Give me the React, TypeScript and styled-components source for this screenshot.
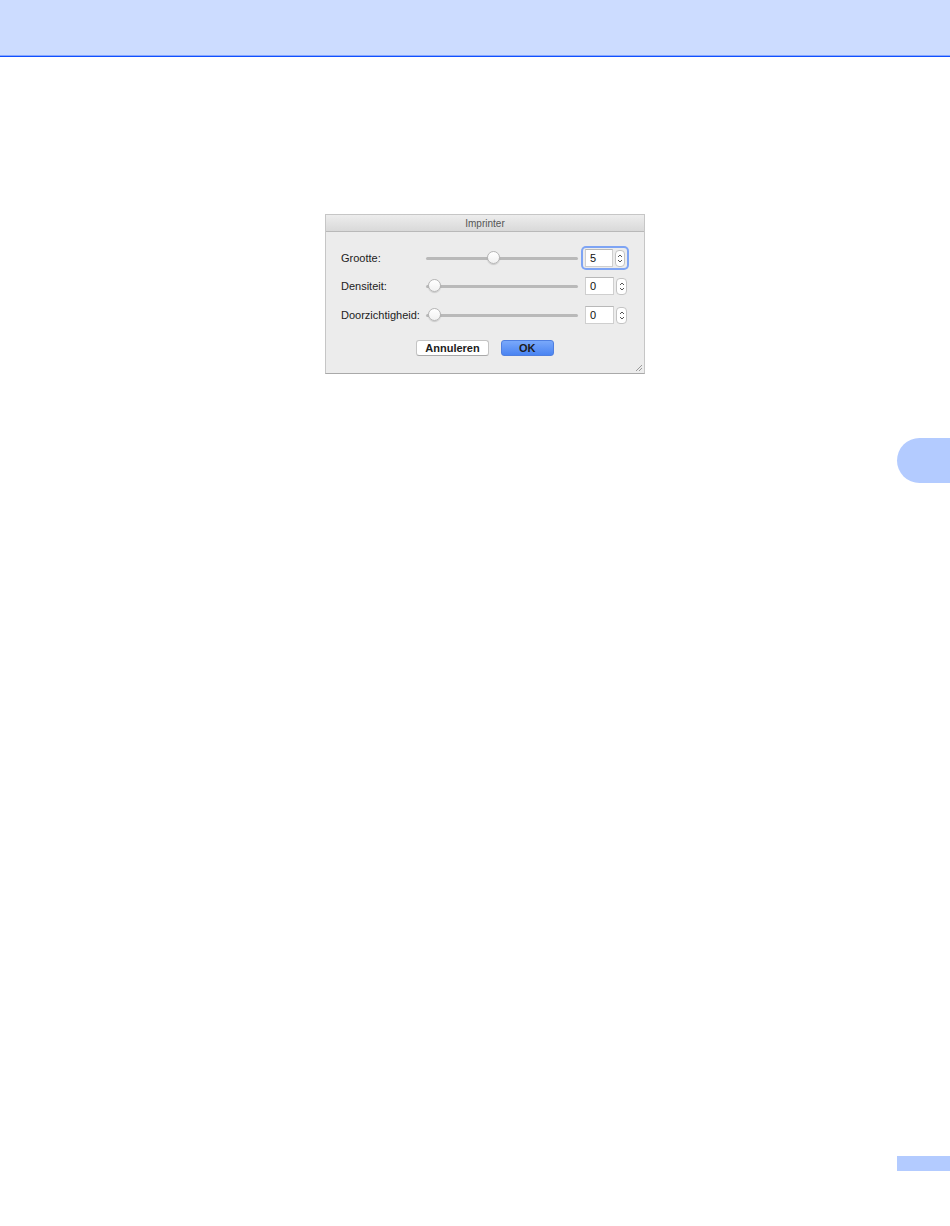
import React from 'react'
import styled, { createGlobalStyle } from 'styled-components'

const GlobalStyle = createGlobalStyle`
  html, body {
    margin: 0;
    padding: 0;
    background: #ffffff;
  }
  body {
    font-family: "Liberation Sans", Arial, sans-serif;
  }
`

const Page = styled.div`
  width: 950px;
  height: 1226px;
  display: flex;
  flex-direction: column;
  overflow: hidden;
`

const TopBand = styled.header`
  height: 55px;
  background: #ccdcff;
  border-bottom: 1px solid #86a6ff;
  box-shadow: 0 1px 0 #1150ff;
  flex-shrink: 0;
`

const Body = styled.div`
  flex: 1;
  display: flex;
  margin-top: 1px;
`

const Main = styled.main`
  flex: 1;
  padding: 157px 0 0 325px;
`

const SideRail = styled.aside`
  width: 53px;
  display: flex;
  flex-direction: column;
  align-items: flex-end;
  padding: 381px 0 55px;
`

const ChapterTab = styled.div`
  width: 53px;
  height: 45px;
  background: #b3cbff;
  border-radius: 23px 0 0 23px;
`

const PageNumber = styled.div`
  margin-top: auto;
  width: 53px;
  height: 15px;
  background: #b3cbff;
`

const Dialog = styled.div`
  position: relative;
  width: 320px;
  height: 160px;
  box-sizing: border-box;
  background: #ececec;
  border: 1px solid #c6c6c6;
  border-bottom-color: #a9a9a9;
  display: flex;
  flex-direction: column;
`

const TitleBar = styled.div`
  height: 17px;
  box-sizing: border-box;
  background: linear-gradient(#ededed, #d9d9d9);
  border-bottom: 1px solid #b9b9b9;
  display: flex;
  align-items: center;
  justify-content: center;
  font-size: 10px;
  color: #555555;
`

const Content = styled.div`
  padding: 16px 17px 0 15px;
  display: flex;
  flex-direction: column;
  gap: 11px;
`

const Row = styled.div`
  display: grid;
  grid-template-columns: 85px 159px 30px 12px;
  align-items: center;
  height: 18px;
`

const Label = styled.span`
  font-size: 11px;
  color: #222222;
  white-space: nowrap;
`

const Track = styled.div`
  position: relative;
  height: 3px;
  background: #b9b9b9;
  border-radius: 2px;
  margin-right: 7px;
`

const Knob = styled.div`
  position: absolute;
  top: -6px;
  width: 13px;
  height: 13px;
  box-sizing: border-box;
  border-radius: 50%;
  background: linear-gradient(#ffffff, #f1f1f1);
  border: 1px solid #b5b5b5;
  box-shadow: 0 1px 1px rgba(0, 0, 0, 0.15);
`

const FieldGroup = styled.div<{ $focused?: boolean }>`
  grid-column: 3 / span 2;
  display: flex;
  align-items: center;
  gap: 2px;
  height: 18px;
  margin-left: ${p => (p.$focused ? '-2px' : '0')};
  padding: ${p => (p.$focused ? '1px 2px' : '0')};
  border-radius: 3px;
  box-shadow: ${p => (p.$focused ? '0 0 0 2px #7ea4f4' : 'none')};
`

const NumberField = styled.div`
  width: 30px;
  height: 18px;
  box-sizing: border-box;
  background: #ffffff;
  border: 1px solid #cfcfcf;
  border-top-color: #b8b8b8;
  font-size: 11px;
  color: #111111;
  padding: 2px 0 0 4px;
`

const Stepper = styled.div`
  width: 11px;
  height: 17px;
  box-sizing: border-box;
  background: #ffffff;
  border: 1px solid #c4c4c4;
  border-radius: 4px;
  display: flex;
  align-items: center;
  justify-content: center;
`

const ButtonRow = styled.div`
  display: flex;
  justify-content: center;
  gap: 12px;
  margin-top: 5px;
  padding-left: 2px;
`

const Button = styled.button<{ $primary?: boolean }>`
  height: 16px;
  min-width: ${p => (p.$primary ? '53px' : '71px')};
  box-sizing: border-box;
  padding: 0 8px;
  border-radius: 3px;
  font-family: "Liberation Sans", Arial, sans-serif;
  font-size: 11px;
  font-weight: 700;
  line-height: 14px;
  color: #1c1c1c;
  cursor: pointer;
  ${p => p.$primary ? `
    background: linear-gradient(#79a8fa, #4a84f2);
    border: 1px solid #4f7fe0;
  ` : `
    background: #ffffff;
    border: 1px solid #c4c4c4;
    border-bottom-color: #a9a9a9;
  `}
`

const Grip = styled.svg`
  position: absolute;
  right: 1px;
  bottom: 1px;
`

type SliderRow = {
  label: string
  value: number
  pct: number
  focused?: boolean
}

const rows: SliderRow[] = [
  { label: 'Grootte:', value: 5, pct: 40, focused: true },
  { label: 'Densiteit:', value: 0, pct: 1 },
  { label: 'Doorzichtigheid:', value: 0, pct: 1 },
]

const StepperIcon = () => (
  <svg width="6" height="11" viewBox="0 0 6 11">
    <path d="M1 4 L3 2 L5 4" fill="none" stroke="#555" strokeWidth="1" />
    <path d="M1 7 L3 9 L5 7" fill="none" stroke="#555" strokeWidth="1" />
  </svg>
)

const App: React.FC = () => {
  return (
    <>
      <GlobalStyle />
      <Page>
        <TopBand />
        <Body>
          <Main>
            <Dialog>
              <TitleBar>Imprinter</TitleBar>
              <Content>
                {rows.map(row => (
                  <Row key={row.label}>
                    <Label>{row.label}</Label>
                    <Track>
                      <Knob style={{ left: `${row.pct}%` }} />
                    </Track>
                    <FieldGroup $focused={row.focused}>
                      <NumberField>{row.value}</NumberField>
                      <Stepper>
                        <StepperIcon />
                      </Stepper>
                    </FieldGroup>
                  </Row>
                ))}
                <ButtonRow>
                  <Button>Annuleren</Button>
                  <Button $primary>OK</Button>
                </ButtonRow>
              </Content>
              <Grip width="9" height="9" viewBox="0 0 9 9">
                <path d="M8 2 L2 8 M8 5 L5 8" stroke="#9a9a9a" strokeWidth="1" />
              </Grip>
            </Dialog>
          </Main>
          <SideRail>
            <ChapterTab />
            <PageNumber />
          </SideRail>
        </Body>
      </Page>
    </>
  )
}

export default App
